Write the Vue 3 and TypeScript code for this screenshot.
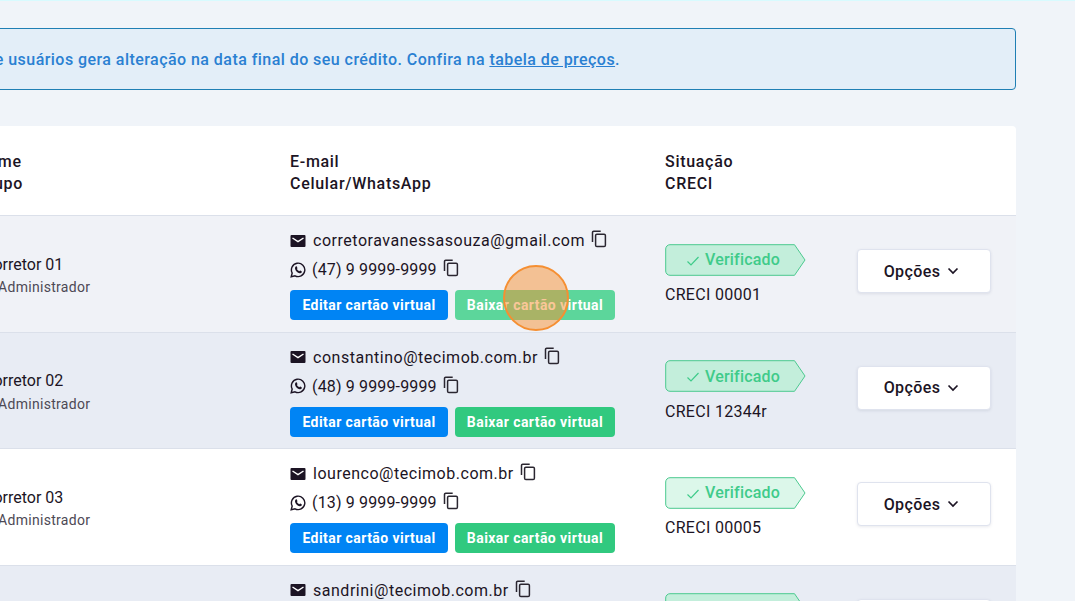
<script setup lang="ts">
interface Broker {
  name: string
  email: string
  phone: string
  creci: string
}

const brokers: Broker[] = [
  { name: 'Corretor 01', email: 'corretoravanessasouza@gmail.com', phone: '(47) 9 9999-9999', creci: 'CRECI 00001' },
  { name: 'Corretor 02', email: 'constantino@tecimob.com.br', phone: '(48) 9 9999-9999', creci: 'CRECI 12344r' },
  { name: 'Corretor 03', email: 'lourenco@tecimob.com.br', phone: '(13) 9 9999-9999', creci: 'CRECI 00005' },
  { name: 'Corretor 04', email: 'sandrini@tecimob.com.br', phone: '(48) 9 9999-9999', creci: 'CRECI 00006' },
]
</script>

<template>
  <div class="page">
    <div class="notice">
      <p>
        Alterar o número de usuários gera alteração na data final do seu crédito. Confira na
        <a href="#">tabela de preços</a>.
      </p>
    </div>

    <div class="card">
      <div class="row head">
        <div>Nome<br />Grupo</div>
        <div>E-mail<br />Celular/WhatsApp</div>
        <div>Situação<br />CRECI</div>
        <div></div>
      </div>

      <div v-for="(b, i) in brokers" :key="b.email" class="row body" :class="`r${i}`">
        <div class="name">
          <div>{{ b.name }}</div>
          <small>Administrador</small>
        </div>
        <div class="contact">
          <div class="line">
            <svg class="ico" width="16" height="16" viewBox="0 0 16 16">
              <path fill="#1c1424" d="M1.500 2h13a1 1 0 0 1 1 1v10a1 1 0 0 1-1 1h-13a1 1 0 0 1-1-1V3a1 1 0 0 1 1-1z" />
              <path fill="none" stroke="#fff" stroke-width="1.400" d="M2.500 5 8 8.600 13.500 5" />
            </svg>
            <span class="txt">{{ b.email }}</span>
            <svg class="copy" width="16" height="18" viewBox="0 0 16 18" fill="none" stroke="#2a2630" stroke-width="1.500">
              <path d="M1.500 12V2.500a1.200 1.200 0 0 1 1.200-1.200h7" />
              <rect x="4.600" y="4.200" width="9.800" height="12.400" rx="1.300" />
            </svg>
          </div>
          <div class="line">
            <svg class="ico wa" width="16" height="16" viewBox="0 0 16 16">
              <path fill="none" stroke="#1c1424" stroke-width="1.400" d="M1.200 14.800 2.200 11A6.700 6.700 0 1 1 5 13.800z" />
              <path fill="#1c1424" d="M5.700 4.500c.5-.4 1-.3 1.200.2l.5 1.200c.1.3 0 .5-.5 1.100.5 1 1.300 1.700 2.400 2.200.5-.6.7-.7 1-.6l1.200.6c.4.2.5.5.3 1-.4.9-1.300 1.200-2.200 1-2.200-.5-3.900-2.200-4.500-4.300-.2-.9.1-1.900.6-2.400z" />
            </svg>
            <span class="txt phone">{{ b.phone }}</span>
            <svg class="copy" width="16" height="18" viewBox="0 0 16 18" fill="none" stroke="#2a2630" stroke-width="1.500">
              <path d="M1.500 12V2.500a1.200 1.200 0 0 1 1.200-1.200h7" />
              <rect x="4.600" y="4.200" width="9.800" height="12.400" rx="1.300" />
            </svg>
          </div>
          <div class="actions">
            <button class="btn blue">Editar cartão virtual</button>
            <button class="btn green" :class="{ hover: i === 0 }">Baixar cartão virtual</button>
          </div>
        </div>
        <div class="status">
          <div class="badge">
            <svg class="shape" width="141" height="32" viewBox="0 0 141 32">
              <path d="M5 .7h124.500L140 16l-10.500 15.300H5A4.300 4.300 0 0 1 .7 27V5A4.300 4.300 0 0 1 5 .7z" />
            </svg>
            <svg class="tick" width="14" height="12" viewBox="0 0 14 12" fill="none" stroke="#3fcb8a" stroke-width="1.200">
              <path d="M1.500 6.500 5 10l7.500-8" />
            </svg>
            <span>Verificado</span>
          </div>
          <div class="creci">{{ b.creci }}</div>
        </div>
        <div class="opts">
          <button class="options">
            Opções
            <svg width="12" height="8" viewBox="0 0 12 8" fill="none" stroke="#1c1424" stroke-width="1.700">
              <path d="M1.500 1.500 6 6l4.500-4.500" />
            </svg>
          </button>
        </div>
      </div>
    </div>

    <div class="cursor"></div>
  </div>
</template>

<style scoped>
.page {
  position: relative;
  width: 1075px;
  height: 601px;
  box-sizing: border-box;
  overflow: hidden;
  padding: 27px 59px 0 0;
  background: #f0f4f9;
  border-top: 1px solid #d8fbff;
  font-family: Roboto, "Liberation Sans", sans-serif;
  color: #1c1424;
}
.notice {
  width: 1100px;
  height: 62px;
  margin-left: -84px;
  box-sizing: border-box;
  display: flex;
  align-items: center;
  justify-content: flex-end;
  padding-right: 395px;
  background: #e3eef8;
  border: 1px solid #1f7fb4;
  border-radius: 4px;
  color: #2a80d2;
  font-size: 16px;
  font-weight: 500;
  letter-spacing: 0.45px;
  white-space: nowrap;
}
.notice p {
  margin: 0;
}
.notice a {
  color: #2a80d2;
  text-decoration: underline;
}
.card {
  width: 1100px;
  margin: 36px 0 0 -84px;
  background: #fff;
  border-radius: 4px 4px 0 0;
}
.row {
  display: grid;
  grid-template-columns: 374px 375px 192px 159px;
  box-sizing: border-box;
  border-bottom: 1px solid #dbe0ea;
}
.head {
  height: 90px;
  padding-top: 4px;
  align-items: center;
  font-size: 16px;
  font-weight: 500;
  line-height: 22px;
  letter-spacing: 0.7px;
}
.head > div:first-child {
  padding-left: 60px;
}
.body {
  height: 116.500px;
}
.r0 {
  background: #f0f2f7;
}
.r1,
.r3 {
  background: #e8ecf4;
}
.r2 {
  background: #fff;
}
.name {
  padding: 38.500px 0 0 67px;
  font-size: 16px;
  line-height: 20px;
}
.name small {
  display: block;
  margin: 2.500px 0 0 15px;
  font-size: 14px;
  letter-spacing: 0.3px;
  color: #4d4955;
}
.contact {
  padding-top: 10px;
}
.line {
  display: flex;
  align-items: center;
  height: 29px;
  font-size: 16px;
  letter-spacing: 0.52px;
}
.ico {
  flex: none;
  margin-right: 7px;
}
.wa {
  margin-right: 6px;
}
.phone {
  letter-spacing: 0.15px;
}
.copy {
  flex: none;
  margin: -3px 0 0 6px;
}
.actions {
  display: flex;
  gap: 7px;
  margin-top: 6px;
}
.btn {
  width: 158px;
  height: 30px;
  padding: 0;
  border: 0;
  border-radius: 4px;
  color: #fff;
  font: 700 14px Roboto, "Liberation Sans", sans-serif;
  letter-spacing: 0.43px;
}
.blue {
  background: #0084f4;
}
.green {
  width: 160px;
  background: #31c97f;
}
.green.hover {
  background: #5cd69b;
}
.status {
  padding-top: 27.500px;
}
.badge {
  position: relative;
  width: 141px;
  height: 32px;
  display: flex;
  align-items: center;
  color: #3fcb8a;
  font-size: 16px;
  font-weight: 500;
  letter-spacing: 0.2px;
}
.shape {
  position: absolute;
  left: 0;
  top: 0;
}
.shape path {
  fill: #dcf7ea;
  stroke: #4cc98f;
  stroke-width: 1;
}
.r0 .shape path,
.r1 .shape path,
.r3 .shape path {
  fill: #c3eedb;
}
.tick {
  position: relative;
  margin: 2px 5px 0 21px;
}
.badge span {
  position: relative;
}
.creci {
  margin-top: 9.500px;
  font-size: 16px;
  letter-spacing: 0.3px;
}
.opts {
  padding-top: 33px;
}
.options {
  width: 134px;
  height: 44px;
  padding: 0 5px 0 0;
  display: flex;
  align-items: center;
  justify-content: center;
  gap: 7px;
  background: #fff;
  border: 1px solid #dfe3ee;
  border-radius: 4px;
  box-shadow: 0 1px 3px rgba(40, 50, 90, 0.1);
  color: #1c1424;
  font: 500 16px Roboto, "Liberation Sans", sans-serif;
  letter-spacing: 0.4px;
}
.cursor {
  position: absolute;
  left: 503px;
  top: 264px;
  width: 66px;
  height: 66px;
  box-sizing: border-box;
  border: 2px solid #f58f32;
  border-radius: 50%;
  background: rgba(245, 143, 50, 0.5);
}
</style>

<style>
html,
body {
  margin: 0;
  overflow: hidden;
}
</style>
